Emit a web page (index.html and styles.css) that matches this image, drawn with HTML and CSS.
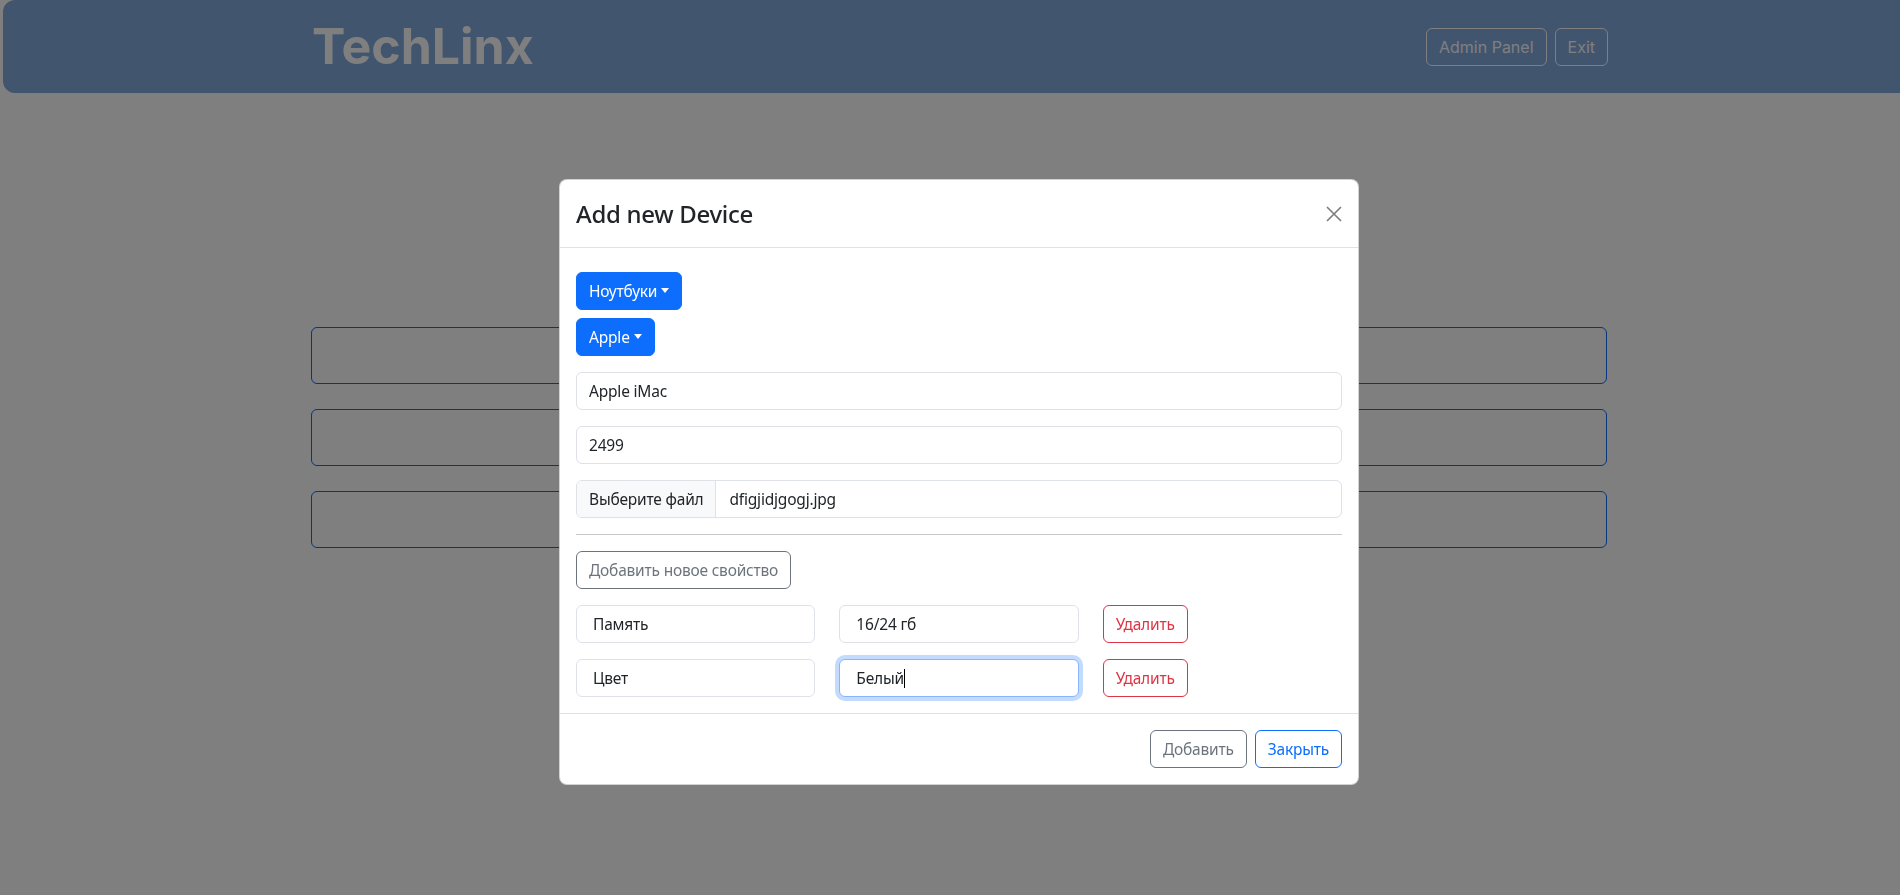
FILE: index.html
```html
<!DOCTYPE html>
<html lang="ru">
<head>
<meta charset="utf-8">
<title>TechLinx — Admin</title>
<link rel="stylesheet" href="styles.css">
</head>
<body>
<header class="navbar">
  <div class="nav-inner">
    <span class="brand">TechLinx</span>
    <div class="nav-actions">
      <button class="nav-btn">Admin Panel</button>
      <button class="nav-btn">Exit</button>
    </div>
  </div>
</header>

<main class="admin">
  <div class="admin-btn"></div>
  <div class="admin-btn"></div>
  <div class="admin-btn"></div>
</main>

<div class="backdrop"></div>

<div class="modal-wrap">
  <div class="modal">
    <div class="modal-header">
      <h4 class="modal-title">Add new Device</h4>
      <button class="btn-close" aria-label="Close">
        <svg width="16" height="16" viewBox="0 0 16 16"><path d="M1 1L15 15M15 1L1 15" stroke="#000" stroke-width="1.7" fill="none"/></svg>
      </button>
    </div>
    <div class="modal-body">
      <div class="dropdown"><button class="btn btn-primary dropdown-toggle">Ноутбуки</button></div>
      <div class="dropdown"><button class="btn btn-primary dropdown-toggle">Apple</button></div>
      <input class="form-control field" value="Apple iMac">
      <input class="form-control field" value="2499">
      <div class="form-control file-input field">
        <span class="file-btn">Выберите файл</span>
        <span class="file-name">dfigjidjgogj.jpg</span>
      </div>
      <hr class="divider">
      <button class="btn btn-outline-secondary">Добавить новое свойство</button>
      <div class="prop-row">
        <div class="prop-col"><input class="form-control prop-input" value="Память"></div>
        <div class="prop-col"><input class="form-control prop-input" value="16/24 гб"></div>
        <div class="prop-col"><button class="btn btn-outline-danger">Удалить</button></div>
      </div>
      <div class="prop-row">
        <div class="prop-col"><input class="form-control prop-input" value="Цвет"></div>
        <div class="prop-col"><div class="form-control prop-input focused">Белый<span class="caret"></span></div></div>
        <div class="prop-col"><button class="btn btn-outline-danger">Удалить</button></div>
      </div>
    </div>
    <div class="modal-footer">
      <button class="btn btn-outline-secondary">Добавить</button>
      <button class="btn btn-outline-primary">Закрыть</button>
    </div>
  </div>
</div>
</body>
</html>
```

FILE: styles.css
```css
* { box-sizing: border-box; }

html, body {
  margin: 0;
  padding: 0;
  background: #ffffff;
  overflow: hidden;
}

body {
  font-family: "Segoe UI", "Noto Sans", "Open Sans", sans-serif;
  font-size: 15.5px;
  letter-spacing: -0.2px;
  line-height: 1.5;
  color: #212529;
  width: 1900px;
  height: 895px;
}

/* ---------- navbar ---------- */
.navbar {
  margin-left: 3px;
  width: 1930px;
  height: 93px;
  background: #82aade;
  border-radius: 12px;
}

.nav-inner {
  width: 1296px;
  margin-left: 309px;
  height: 93px;
  display: flex;
  align-items: center;
  justify-content: space-between;
}

.brand {
  font-family: Inter, Roboto, "Liberation Sans", sans-serif;
  font-weight: 700;
  font-size: 50px;
  letter-spacing: 0;
  line-height: 60px;
  color: #ffffff;
  margin-top: -2px;
}

.nav-actions {
  display: flex;
  gap: 8px;
  margin-top: 0;
}

.nav-btn {
  font-family: Inter, Roboto, "Liberation Sans", sans-serif;
  font-size: 16px;
  letter-spacing: 0;
  line-height: 24px;
  padding: 6px 12px;
  color: #ffffff;
  background: transparent;
  border: 1px solid #ffffff;
  border-radius: 6px;
}

/* ---------- admin page under the modal ---------- */
.admin {
  width: 1296px;
  margin-left: 311px;
  padding-top: 234px;
  display: flex;
  flex-direction: column;
  gap: 25px;
}

.admin-btn {
  height: 57px;
  border: 1px solid #0d6efd;
  border-radius: 6px;
}

/* ---------- backdrop & modal ---------- */
.backdrop {
  position: fixed;
  inset: 0;
  background: rgba(0, 0, 0, 0.5);
}

.modal-wrap {
  position: fixed;
  inset: 0;
  padding-top: 179px;
  padding-left: 559px;
}

.modal {
  width: 800px;
  background: #ffffff;
  border: 1px solid rgba(0, 0, 0, 0.175);
  border-radius: 8px;
}

.modal-header {
  display: flex;
  align-items: center;
  justify-content: space-between;
  padding: 16px;
  border-bottom: 1px solid #dee2e6;
}

.modal-title {
  margin: 0;
  font-size: 24px;
  font-weight: 500;
  letter-spacing: -0.3px;
  line-height: 35px;
}

.btn-close {
  width: 32px;
  height: 32px;
  padding: 8px;
  margin-right: -8px;
  border: 0;
  background: transparent;
  opacity: 0.5;
  display: flex;
}

.modal-body {
  padding: 16px;
}

.modal-footer {
  display: flex;
  justify-content: flex-end;
  gap: 8px;
  padding: 16px;
  border-top: 1px solid #dee2e6;
}

/* ---------- buttons ---------- */
.btn {
  font-family: inherit;
  font-size: 15.5px;
  letter-spacing: -0.2px;
  line-height: 24px;
  padding: 6px 12px;
  border-radius: 6px;
  border: 1px solid transparent;
  background: transparent;
  display: inline-block;
}

.btn-primary {
  background: #0d6efd;
  border-color: #0d6efd;
  color: #ffffff;
}

.btn-outline-secondary {
  color: #6c757d;
  border-color: #6c757d;
}

.btn-outline-primary {
  color: #0d6efd;
  border-color: #0d6efd;
}

.btn-outline-danger {
  color: #dc3545;
  border-color: #dc3545;
}

.dropdown {
  margin: 8px 0;
}

.dropdown-toggle::after {
  content: "";
  display: inline-block;
  margin-left: 4px;
  vertical-align: 4px;
  border-top: 5px solid currentColor;
  border-left: 4.5px solid transparent;
  border-right: 4.5px solid transparent;
}

/* ---------- form controls ---------- */
.form-control {
  display: block;
  width: 100%;
  height: 38px;
  font-family: inherit;
  font-size: 15.5px;
  letter-spacing: -0.2px;
  line-height: 24px;
  padding: 6px 12px;
  color: #212529;
  background: #ffffff;
  border: 1px solid #dee2e6;
  border-radius: 6px;
  outline: none;
}

.field {
  margin-top: 16px;
}

.file-input {
  display: flex;
  padding: 0;
  overflow: hidden;
}

.file-btn {
  padding: 6px 12px;
  background: #f8f9fa;
  border-right: 1px solid #dee2e6;
}

.file-name {
  padding: 6px 13px;
}

.divider {
  margin: 16px 0;
  border: 0;
  border-top: 1px solid #212529;
  opacity: 0.25;
}

.prop-row {
  display: flex;
  margin: 16px -12px 0;
}

.prop-col {
  flex: 0 0 33.3333%;
  padding: 0 12px;
}

.prop-input {
  padding-left: 16px;
}

.focused {
  border-color: #86b7fe;
  box-shadow: 0 0 0 4px rgba(13, 110, 253, 0.25);
}

.caret {
  display: inline-block;
  width: 1px;
  height: 19px;
  background: #000000;
  vertical-align: -4px;
}
```
